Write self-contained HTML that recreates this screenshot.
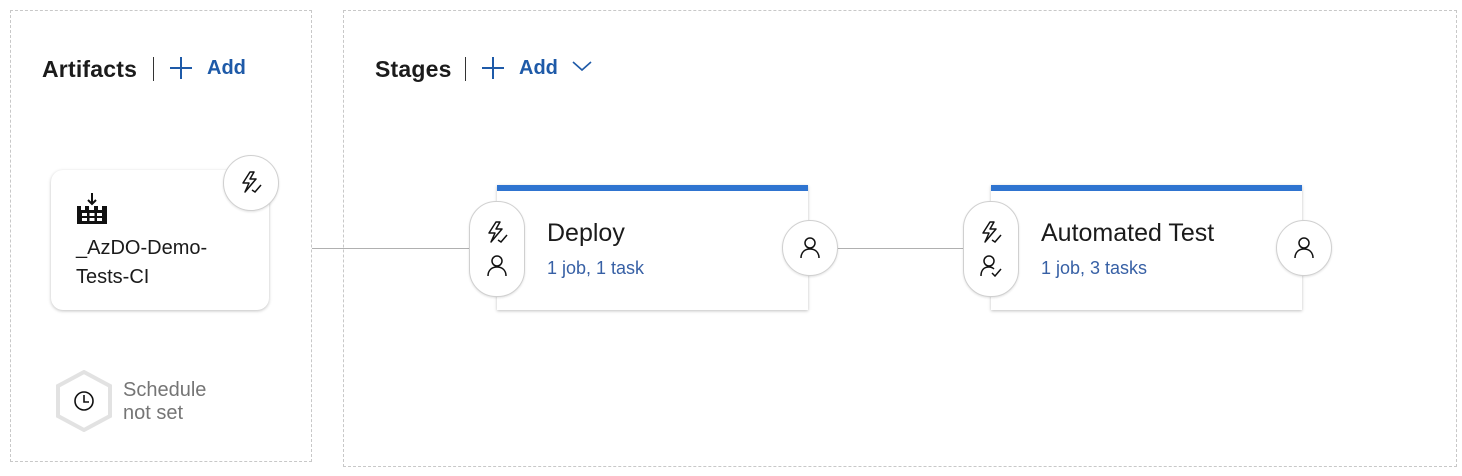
<!DOCTYPE html>
<html><head><style>
body{margin:0;width:1462px;height:476px;background:#fff;font-family:"Liberation Sans",sans-serif;position:relative;overflow:hidden}
.a{position:absolute}
.box{position:absolute;border:1px dashed #c8c8c8}
.h{position:absolute;font-size:23px;font-weight:bold;color:#1b1b1b;top:56px;letter-spacing:0.2px}
.sep{position:absolute;width:1px;height:24px;background:#333;top:57px}
.add{position:absolute;font-size:20px;font-weight:bold;color:#1e5aa8;top:57px}
.card{position:absolute;background:#fff;box-shadow:0 1px 3px rgba(0,0,0,.25)}
.circ{position:absolute;width:54px;height:54px;border-radius:50%;background:#fff;border:1px solid #d0d0d0;box-shadow:0 1px 2px rgba(0,0,0,.12)}
.line{position:absolute;height:1px;background:#b0b0b0}
.title{position:absolute;font-size:25px;color:#1b1b1b}
.sub{position:absolute;font-size:18px;color:#3760a5}
</style></head><body>
<div class="box" style="left:10px;top:10px;width:300px;height:450px"></div>
<div class="box" style="left:343px;top:10px;width:1112px;height:455px"></div>

<div class="h" style="left:42px">Artifacts</div>
<div class="sep" style="left:153px"></div>
<svg class="a" style="left:169px;top:56px" width="24" height="24"><path d="M12 1V23M1 12H23" stroke="#1e5aa8" stroke-width="2"/></svg>
<div class="add" style="left:207px">Add</div>

<div class="h" style="left:375px">Stages</div>
<div class="sep" style="left:465px"></div>
<svg class="a" style="left:481px;top:56px" width="24" height="24"><path d="M12 1V23M1 12H23" stroke="#1e5aa8" stroke-width="2"/></svg>
<div class="add" style="left:519px">Add</div>
<svg class="a" style="left:572px;top:60px" width="20" height="12"><path d="M1 2L10 10L19 2" stroke="#1e5aa8" stroke-width="1.6" fill="none"/></svg>

<div class="line" style="left:312px;top:248px;width:157px"></div>
<div class="line" style="left:837px;top:248px;width:126px"></div>

<div class="card" style="left:51px;top:170px;width:218px;height:140px;border-radius:12px"></div>
<svg class="a" style="left:76px;top:192px" width="32" height="32"><path d="M16 1V12M12 8L16 12L20 8" stroke="#111" stroke-width="2" fill="none"/><path d="M1 32V14H5V18H9V14H13V18H18V14H22V18H26V14H31V32Z" fill="#111"/><rect x="6" y="21" width="5" height="3" fill="#fff"/><rect x="13.5" y="21" width="5" height="3" fill="#fff"/><rect x="21" y="21" width="5" height="3" fill="#fff"/><rect x="6" y="26" width="5" height="3" fill="#fff"/><rect x="13.5" y="26" width="5" height="3" fill="#fff"/><rect x="21" y="26" width="5" height="3" fill="#fff"/></svg>
<div class="a" style="left:76px;top:234px;font-size:20px;line-height:29px;color:#1b1b1b">_AzDO-Demo-<br>Tests-CI</div>
<div class="circ" style="left:223px;top:155px"></div>
<svg class="a" style="left:239px;top:170px" width="24" height="24"><path d="M11 2L4 13H10L6 22L17 9H11L15 2Z" stroke="#111" stroke-width="1.5" fill="none" stroke-linejoin="round"/><path d="M13 20L16 22L22 15" stroke="#111" stroke-width="1.5" fill="none"/></svg>

<svg class="a" style="left:55px;top:370px" width="58" height="62"><polygon points="29,2 55,16 55,46 29,60 3,46 3,16" fill="#fff" stroke="#e2e2e2" stroke-width="4"/><circle cx="29" cy="31" r="9" fill="none" stroke="#111" stroke-width="1.6"/><path d="M29 25V32H34" stroke="#111" stroke-width="1.6" fill="none"/></svg>
<div class="a" style="left:123px;top:379px;font-size:20px;line-height:23px;color:#757575">Schedule<br>not set</div>

<!-- Deploy -->
<div class="card" style="left:497px;top:185px;width:311px;height:125px;border-top:6px solid #2f74d0;box-sizing:border-box"></div>
<div class="a" style="left:469px;top:201px;width:54px;height:94px;border-radius:27px;background:#fff;border:1px solid #d0d0d0;box-shadow:0 1px 2px rgba(0,0,0,.12)"></div>
<svg class="a" style="left:485px;top:220px" width="24" height="24"><path d="M11 2L4 13H10L6 22L17 9H11L15 2Z" stroke="#111" stroke-width="1.5" fill="none" stroke-linejoin="round"/><path d="M13 20L16 22L22 15" stroke="#111" stroke-width="1.5" fill="none"/></svg>
<svg class="a" style="left:485px;top:253px" width="24" height="24"><circle cx="12" cy="8" r="5" fill="none" stroke="#111" stroke-width="1.5"/><path d="M3 23C3 17 7 14 12 14C17 14 21 17 21 23" fill="none" stroke="#111" stroke-width="1.5"/></svg>
<div class="title" style="left:547px;top:219px">Deploy</div>
<div class="sub" style="left:547px;top:258px">1 job, 1 task</div>
<div class="circ" style="left:782px;top:220px"></div>
<svg class="a" style="left:798px;top:235px" width="24" height="24"><circle cx="12" cy="8" r="5" fill="none" stroke="#111" stroke-width="1.5"/><path d="M3 23C3 17 7 14 12 14C17 14 21 17 21 23" fill="none" stroke="#111" stroke-width="1.5"/></svg>

<!-- Automated Test -->
<div class="card" style="left:991px;top:185px;width:311px;height:125px;border-top:6px solid #2f74d0;box-sizing:border-box"></div>
<div class="a" style="left:963px;top:201px;width:54px;height:94px;border-radius:27px;background:#fff;border:1px solid #d0d0d0;box-shadow:0 1px 2px rgba(0,0,0,.12)"></div>
<svg class="a" style="left:979px;top:220px" width="24" height="24"><path d="M11 2L4 13H10L6 22L17 9H11L15 2Z" stroke="#111" stroke-width="1.5" fill="none" stroke-linejoin="round"/><path d="M13 20L16 22L22 15" stroke="#111" stroke-width="1.5" fill="none"/></svg>
<svg class="a" style="left:979px;top:253px" width="24" height="24"><circle cx="10" cy="8" r="5" fill="none" stroke="#111" stroke-width="1.5"/><path d="M2 23C2 17 5 14 10 14C12 14 14 15 15 16" fill="none" stroke="#111" stroke-width="1.5"/><path d="M13 20L16 23L22 16" stroke="#111" stroke-width="1.5" fill="none"/></svg>
<div class="title" style="left:1041px;top:219px">Automated Test</div>
<div class="sub" style="left:1041px;top:258px">1 job, 3 tasks</div>
<div class="circ" style="left:1276px;top:220px"></div>
<svg class="a" style="left:1292px;top:235px" width="24" height="24"><circle cx="12" cy="8" r="5" fill="none" stroke="#111" stroke-width="1.5"/><path d="M3 23C3 17 7 14 12 14C17 14 21 17 21 23" fill="none" stroke="#111" stroke-width="1.5"/></svg>
</body></html>
